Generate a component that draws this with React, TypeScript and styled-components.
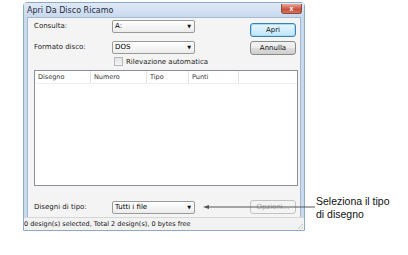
import React from "react";
import styled, { createGlobalStyle } from "styled-components";

const GlobalStyle = createGlobalStyle`
  html, body {
    margin: 0;
    padding: 0;
    background: #ffffff;
  }
  body {
    font-family: "DejaVu Sans", "Liberation Sans", sans-serif;
    color: #000;
  }
`;

const Page = styled.div`
  position: relative;
  width: 408px;
  height: 255px;
  padding: 2px 0 0 23px;
  box-sizing: border-box;
`;

const Dialog = styled.div`
  width: 282px;
  height: 229px;
  box-sizing: border-box;
  border: 1px solid #8ea8c8;
  border-radius: 4px 4px 0 0;
  background: #c9daef;
  display: flex;
  flex-direction: column;
`;

const TitleBar = styled.div`
  height: 14px;
  display: flex;
  align-items: center;
  justify-content: space-between;
  padding: 0 2px 0 3px;
  background: linear-gradient(#dfe9f6, #c8d9ee);
`;

const Title = styled.span`
  font-size: 8px;
  color: #1e2b3c;
`;

const CloseButton = styled.div`
  width: 19px;
  height: 9px;
  margin-top: -3px;
  border: 1px solid #8b4a40;
  border-top: none;
  border-radius: 0 0 3px 3px;
  background: linear-gradient(#e9a99a, #c7503b 60%, #d8735c);
  display: flex;
  align-items: center;
  justify-content: center;
  color: #fff;
  font-size: 7px;
  font-weight: bold;
  font-family: "Liberation Sans", sans-serif;
  line-height: 1;
`;

const Body = styled.div`
  flex: 1;
  margin: 0 3px;
  background: #f4f4f4;
  border: 1px solid #a5b9d3;
  border-bottom: none;
  padding: 1px 4px 0 6px;
  display: flex;
  flex-direction: column;
`;

const TopSection = styled.div`
  display: flex;
  justify-content: space-between;
`;

const Fields = styled.div`
  display: flex;
  flex-direction: column;
`;

const FieldRow = styled.div<{ $gap?: number }>`
  display: flex;
  align-items: center;
  height: 14px;
  margin-bottom: ${(p) => p.$gap ?? 0}px;
`;

const Label = styled.span`
  width: 78px;
  font-size: 7px;
  color: #222;
`;

const Combo = styled.div`
  width: 83px;
  height: 13px;
  box-sizing: border-box;
  border: 1px solid #9a9a9a;
  border-radius: 2px;
  background: linear-gradient(#ffffff, #ececec);
  display: flex;
  align-items: center;
  justify-content: space-between;
  padding: 0 3px 0 2px;
  font-size: 7px;
`;

const Arrow = styled.span`
  font-size: 5px;
  color: #111;
`;

const CheckRow = styled.div`
  display: flex;
  align-items: center;
  margin: 3px 0 0 80px;
  height: 9px;
  font-size: 7px;
  color: #222;
`;

const CheckBox = styled.span`
  width: 7px;
  height: 7px;
  border: 1px solid #b8b8b8;
  background: linear-gradient(#e2e2e2, #f6f6f6);
  margin-right: 3px;
`;

const Buttons = styled.div`
  display: flex;
  flex-direction: column;
  gap: 4px;
  padding-top: 4px;
`;

const Button = styled.div<{ $default?: boolean; $disabled?: boolean }>`
  width: 46px;
  height: 14px;
  box-sizing: border-box;
  border: 1px solid
    ${(p) => (p.$default ? "#3c7fb1" : p.$disabled ? "#c2c2c2" : "#8a8a8a")};
  border-radius: 3px;
  background: ${(p) =>
    p.$disabled
      ? "#f4f4f4"
      : p.$default
      ? "linear-gradient(#eaf6fd, #bee6fd)"
      : "linear-gradient(#f2f2f2, #ebebeb 50%, #dddddd 51%, #cfcfcf)"};
  box-shadow: ${(p) => (p.$default ? "inset 0 0 0 1px #a5dcf8" : "none")};
  display: flex;
  align-items: center;
  justify-content: center;
  font-size: 7px;
  color: ${(p) => (p.$disabled ? "#a8a8a8" : "#111")};
`;

const List = styled.div`
  margin-top: 4px;
  width: 264px;
  height: 116px;
  box-sizing: border-box;
  border: 1px solid #8c9096;
  background: #fff;
`;

const HeaderRow = styled.div`
  display: flex;
  height: 12px;
  border-bottom: 1px solid #f0f0f0;
`;

const HeaderCell = styled.div<{ $w: number }>`
  width: ${(p) => p.$w}px;
  box-sizing: border-box;
  padding-left: 3px;
  border-right: 1px solid #e3e3e3;
  font-size: 6.5px;
  line-height: 12px;
  color: #333;
`;

const BottomRow = styled.div`
  margin-top: 14px;
  display: flex;
  align-items: center;
  justify-content: space-between;
`;

const BottomLeft = styled.div`
  display: flex;
  align-items: center;
`;

const StatusBar = styled.div`
  height: 12px;
  border-top: 1px solid #d6d6d6;
  background: #f2f2f2;
  display: flex;
  align-items: center;
  justify-content: space-between;
  font-size: 6.5px;
  color: #111;
`;

const Grip = styled.span`
  width: 6px;
  height: 6px;
  align-self: flex-end;
  margin: 0 1px 1px 0;
  background: linear-gradient(135deg, transparent 50%, #c8c8c8 50%, #c8c8c8 60%, transparent 60%, transparent 75%, #c8c8c8 75%, #c8c8c8 85%, transparent 85%);
`;

const Callout = styled.div`
  position: absolute;
  left: 203px;
  top: 199px;
  display: flex;
  align-items: flex-start;
`;

const CalloutLine = styled.svg`
  margin-top: 3px;
`;

const CalloutText = styled.div`
  font-family: "Liberation Sans", Arial, sans-serif;
  font-size: 10.5px;
  line-height: 13px;
  color: #111;
  margin-left: 1px;
  margin-top: -4px;
`;

const columns = [
  { name: "Disegno", w: 56 },
  { name: "Numero", w: 56 },
  { name: "Tipo", w: 42 },
  { name: "Punti", w: 50 },
];

export default function App() {
  return (
    <>
      <GlobalStyle />
      <Page>
        <Dialog>
          <TitleBar>
            <Title>Apri Da Disco Ricamo</Title>
            <CloseButton>x</CloseButton>
          </TitleBar>
          <Body>
            <TopSection>
              <Fields>
                <FieldRow $gap={7}>
                  <Label>Consulta:</Label>
                  <Combo>
                    A:
                    <Arrow>▼</Arrow>
                  </Combo>
                </FieldRow>
                <FieldRow>
                  <Label>Formato disco:</Label>
                  <Combo>
                    DOS
                    <Arrow>▼</Arrow>
                  </Combo>
                </FieldRow>
                <CheckRow>
                  <CheckBox />
                  Rilevazione automatica
                </CheckRow>
              </Fields>
              <Buttons>
                <Button $default>Apri</Button>
                <Button>Annulla</Button>
              </Buttons>
            </TopSection>
            <List>
              <HeaderRow>
                {columns.map((c) => (
                  <HeaderCell key={c.name} $w={c.w}>
                    {c.name}
                  </HeaderCell>
                ))}
              </HeaderRow>
            </List>
            <BottomRow>
              <BottomLeft>
                <Label>Disegni di tipo:</Label>
                <Combo>
                  Tutti i file
                  <Arrow>▼</Arrow>
                </Combo>
              </BottomLeft>
              <Button $disabled>Opzioni...</Button>
            </BottomRow>
          </Body>
          <StatusBar>
            <span>0 design(s) selected, Total 2 design(s), 0 bytes free</span>
            <Grip />
          </StatusBar>
        </Dialog>
        <Callout>
          <CalloutLine width="112" height="10" viewBox="0 0 112 10">
            <line x1="4" y1="5" x2="112" y2="5" stroke="#555" strokeWidth="1.2" />
            <polygon points="0,5 6,3 6,7" fill="#555" />
          </CalloutLine>
          <CalloutText>
            Seleziona il tipo
            <br />
            di disegno
          </CalloutText>
        </Callout>
      </Page>
    </>
  );
}
